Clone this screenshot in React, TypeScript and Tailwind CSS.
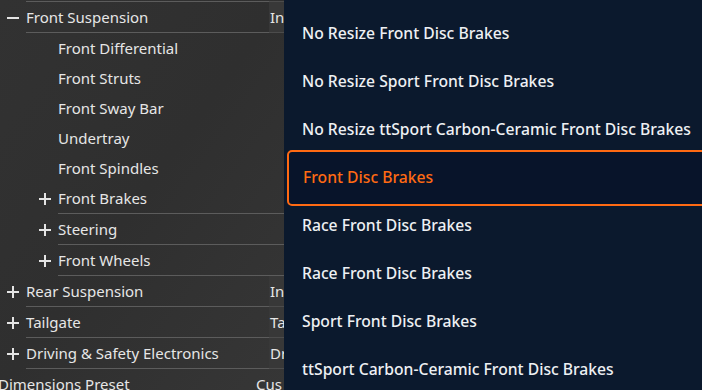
const font = { fontFamily: '"Noto Sans", "Open Sans", sans-serif' };

type Row = { label: string; depth: 0 | 1; sign?: "+" | "-"; value?: string; line?: boolean };

const rows: Row[] = [
  { label: "Front Suspension", depth: 0, sign: "-", value: "In", line: true },
  { label: "Front Differential", depth: 1 },
  { label: "Front Struts", depth: 1 },
  { label: "Front Sway Bar", depth: 1 },
  { label: "Undertray", depth: 1 },
  { label: "Front Spindles", depth: 1 },
  { label: "Front Brakes", depth: 1, sign: "+", line: true },
  { label: "Steering", depth: 1, sign: "+", line: true },
  { label: "Front Wheels", depth: 1, sign: "+", line: true },
  { label: "Rear Suspension", depth: 0, sign: "+", value: "In", line: true },
  { label: "Tailgate", depth: 0, sign: "+", value: "Ta", line: true },
  { label: "Driving & Safety Electronics", depth: 0, sign: "+", value: "Dr", line: true },
];

const options = [
  "No Resize Front Disc Brakes",
  "No Resize Sport Front Disc Brakes",
  "No Resize ttSport Carbon-Ceramic Front Disc Brakes",
  "Front Disc Brakes",
  "Race Front Disc Brakes",
  "Race Front Disc Brakes",
  "Sport Front Disc Brakes",
  "ttSport Carbon-Ceramic Front Disc Brakes",
];

function Sign({ sign }: { sign: "+" | "-" }) {
  return (
    <svg width="12" height="12" viewBox="0 0 12 12" className="shrink-0">
      <rect x="0" y="5" width="12" height="2" fill="#e4e4e4" />
      {sign === "+" && <rect x="5" y="0" width="2" height="12" fill="#e4e4e4" />}
    </svg>
  );
}

function TreeRow({ row }: { row: Row }) {
  const indent = row.depth === 0 ? "pl-[26px]" : "pl-[58px]";
  return (
    <div className={`flex shrink-0 ${row.line ? "h-[31px]" : "h-[30px]"}`}>
      <div className={`relative flex-1 flex ${indent}`}>
        <div className={`flex-1 flex items-center ${row.line ? "border-b border-[#5c5c5c]" : ""}`}>
          <span className="text-[15px] text-[#e6e6e6] whitespace-nowrap">{row.label}</span>
        </div>
        {row.sign && (
          <div className={`absolute top-0 bottom-0 flex items-center ${row.depth === 0 ? "left-[7px]" : "left-[39px]"}`}>
            <Sign sign={row.sign} />
          </div>
        )}
      </div>
      {row.depth === 0 && (
        <div className="w-[15px] flex items-center bg-[#383838] border-b border-[#4c4c4c] overflow-hidden">
          <span className="text-[15px] text-[#e6e6e6] whitespace-nowrap pl-px">{row.value}</span>
        </div>
      )}
    </div>
  );
}

export default function App() {
  return (
    <div className="flex w-[702px] h-[390px] overflow-hidden" style={font}>
      <div className="w-[284px] shrink-0 bg-gradient-to-br from-[#323232] via-[#2f2f2f] to-[#363636] flex flex-col">
        <div className="flex h-[2px] shrink-0">
          <div className="flex-1 ml-[26px] border-b border-[#5c5c5c]" />
          <div className="w-[15px] border-b border-[#4c4c4c]" />
        </div>
        {rows.map((r, i) => (
          <TreeRow key={i} row={r} />
        ))}
        <div className="flex h-[30px] shrink-0 items-center">
          <span className="flex-1 text-[15px] text-[#e6e6e6] whitespace-nowrap -ml-[2px]">Dimensions Preset</span>
          <span className="w-[28px] text-[15px] text-[#e6e6e6] whitespace-nowrap overflow-hidden">Cus</span>
        </div>
      </div>
      <div className="flex-1 bg-[#0b192d] flex flex-col pt-[10px]">
        {options.map((o, i) =>
          i === 3 ? (
            <div
              key={i}
              className="h-[56px] shrink-0 -mr-[20px] ml-[3px] my-[-4px] flex items-center pl-[14px] border-2 border-[#ff6a13] rounded-[5px] bg-[#08142a]"
            >
              <span className="text-[15.7px] font-medium text-[#ff6a13] whitespace-nowrap">{o}</span>
            </div>
          ) : (
            <div key={i} className="h-[48px] shrink-0 flex items-center pl-[18px]">
              <span className="text-[15.7px] font-medium text-[#eef0f3] whitespace-nowrap">{o}</span>
            </div>
          )
        )}
      </div>
    </div>
  );
}
